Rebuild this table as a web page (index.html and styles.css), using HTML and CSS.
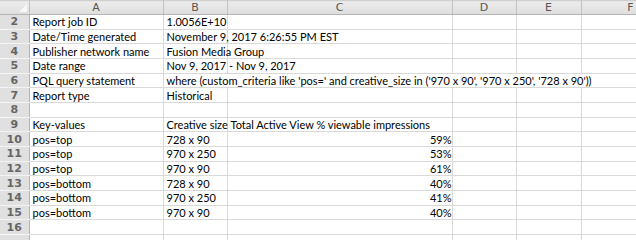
FILE: index.html
```html
<!DOCTYPE html>
<html>
  <head>
    <title>Report export</title>
    <link rel="stylesheet" href="styles.css">
  </head>
  <body>
    <table class="sheet">
      <colgroup>
        <col class="col-rownum">
        <col class="col-a">
        <col class="col-b">
        <col class="col-c">
        <col class="col-d">
        <col class="col-e">
        <col class="col-f">
      </colgroup>
      <thead>
        <tr>
          <th class="corner"><span class="select-all"></span></th>
          <th>A</th>
          <th>B</th>
          <th>C</th>
          <th>D</th>
          <th>E</th>
          <th>F</th>
        </tr>
      </thead>
      <tbody>
        <tr><th>2</th><td>Report job ID</td><td class="pad">1.0056E+10</td><td></td><td></td><td></td><td></td></tr>
        <tr><th>3</th><td>Date/Time generated</td><td class="spill">November 9, 2017 6:26:55 PM EST</td><td></td><td></td><td></td><td></td></tr>
        <tr><th>4</th><td>Publisher network name</td><td class="spill">Fusion Media Group</td><td></td><td></td><td></td><td></td></tr>
        <tr><th>5</th><td>Date range</td><td class="spill">Nov 9, 2017 - Nov 9, 2017</td><td></td><td></td><td></td><td></td></tr>
        <tr class="no-lines"><th>6</th><td>PQL query statement</td><td class="spill pad">where (custom_criteria like 'pos=' and creative_size in ('970 x 90', '970 x 250', '728 x 90'))</td><td></td><td></td><td></td><td></td></tr>
        <tr><th>7</th><td>Report type</td><td>Historical</td><td></td><td></td><td></td><td></td></tr>
        <tr><th>8</th><td></td><td></td><td></td><td></td><td></td><td></td></tr>
        <tr><th>9</th><td>Key-values</td><td>Creative size</td><td>Total Active View % viewable impressions</td><td></td><td></td><td></td></tr>
        <tr><th>10</th><td>pos=top</td><td>728 x 90</td><td class="num">59%</td><td></td><td></td><td></td></tr>
        <tr><th>11</th><td>pos=top</td><td>970 x 250</td><td class="num">53%</td><td></td><td></td><td></td></tr>
        <tr><th>12</th><td>pos=top</td><td>970 x 90</td><td class="num">61%</td><td></td><td></td><td></td></tr>
        <tr><th>13</th><td>pos=bottom</td><td>728 x 90</td><td class="num">40%</td><td></td><td></td><td></td></tr>
        <tr><th>14</th><td>pos=bottom</td><td>970 x 250</td><td class="num">41%</td><td></td><td></td><td></td></tr>
        <tr><th>15</th><td>pos=bottom</td><td>970 x 90</td><td class="num">40%</td><td></td><td></td><td></td></tr>
        <tr><th>16</th><td></td><td></td><td></td><td></td><td></td><td></td></tr>
        <tr><th></th><td></td><td></td><td></td><td></td><td></td><td></td></tr>
      </tbody>
    </table>
  </body>
</html>
```

FILE: styles.css
```css
body {
  margin: 0;
  background: #ffffff;
  overflow: hidden;
}

.sheet {
  border-collapse: collapse;
  table-layout: fixed;
  width: 680px;
  font-family: Lato, "Open Sans", sans-serif;
  font-size: 11px;
  color: #000;
}

.col-rownum { width: 29px; }
.col-a { width: 134px; }
.col-b { width: 64px; }
.col-c { width: 225px; }
.col-d { width: 64px; }
.col-e { width: 65px; }
.col-f { width: 99px; }

.sheet th,
.sheet td {
  height: 13.67px;
  padding: 0;
  line-height: 13px;
  white-space: nowrap;
  overflow: visible;
}

.sheet td {
  border-right: 1px solid #d9d9d9;
  border-bottom: 1px solid #d9d9d9;
  padding-left: 3px;
}

/* column letters */
.sheet thead th {
  height: 12px;
  background: linear-gradient(#ececec, #dedede);
  border-top: 1px solid #d0d0d0;
  border-right: 1px solid #c2c2c2;
  border-bottom: 1px solid #b4b4b4;
  font-family: "DejaVu Sans", sans-serif;
  font-size: 11px;
  font-weight: normal;
  color: #555;
  text-align: center;
}

/* row numbers */
.sheet tbody th {
  background: #e0e0e0;
  border-right: 1px solid #b4b4b4;
  border-bottom: 1px solid #f4f4f4;
  font-family: "DejaVu Sans", sans-serif;
  font-size: 11px;
  font-weight: bold;
  color: #666;
  text-align: center;
}

.corner {
  position: relative;
}

.select-all {
  position: absolute;
  right: 2px;
  bottom: 2px;
  width: 0;
  height: 0;
  border-left: 8px solid transparent;
  border-bottom: 8px solid #f8f8f8;
}

.pad {
  padding-left: 6px;
}

/* text overflowing into the empty cells to its right */
.spill {
  position: relative;
  z-index: 1;
}

.no-lines td:nth-child(n+3) {
  border-right-color: transparent;
}

.num {
  text-align: right;
  padding-right: 3px;
}
```
